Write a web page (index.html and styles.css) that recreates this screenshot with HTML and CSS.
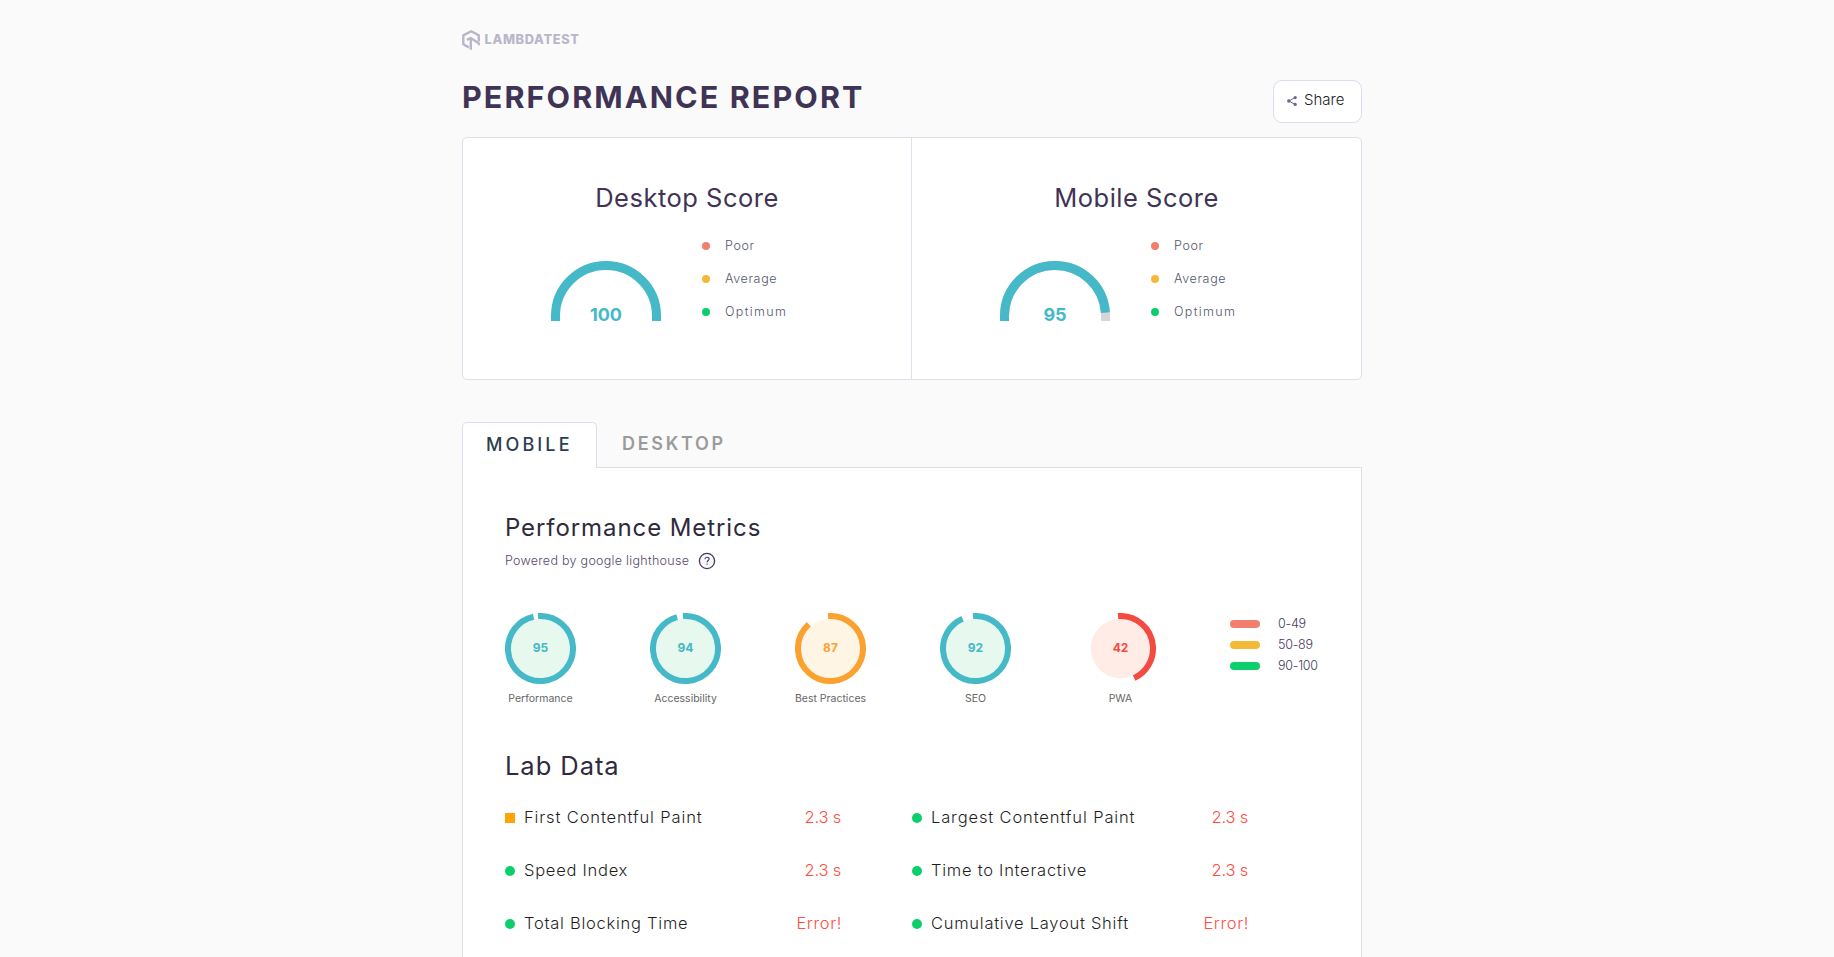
FILE: index.html
```html
<!DOCTYPE html>
<html lang="en">
<head>
<meta charset="utf-8">
<title>Performance Report</title>
<link rel="stylesheet" href="styles.css">
</head>
<body>
<main class="page">
  <div class="logo">
    <svg class="logo-mark" viewBox="0 0 18 20" width="18" height="20" fill="none" stroke="#b9b6ca" stroke-width="2.4" stroke-linejoin="round"><path d="M6.8 17.4 1.3 14.2V5.4L9.2 1.3l7.6 4.1v6.2"/><path d="M4.9 9.8 8.8 8l8.2 5.4v1.8M8.8 8v11.8"/></svg>
    <span class="logo-text">LAMBDATEST</span>
  </div>
  <header class="head">
    <h1 class="title">PERFORMANCE REPORT</h1>
    <button class="share"><svg class="share-icon" viewBox="0 0 10 10" width="10" height="10"><path d="M8.2 1.5 1.9 5l6.3 3.5" fill="none" stroke="#6b6590" stroke-width="1"/><g fill="#6b6590"><circle cx="8.2" cy="1.6" r="1.6"/><circle cx="1.8" cy="5" r="1.7"/><circle cx="8.2" cy="8.4" r="1.6"/></g></svg><span>Share</span></button>
  </header>

  <section class="scores">
    <article class="score">
      <h2 class="score-title">Desktop Score</h2>
      <div class="score-body">
        <svg class="gauge" viewBox="0 0 110 68" width="110" height="68"><path class="gauge-fill" d="M4.5 60V55A50.5 50.5 0 0 1 105.5 55V60"/><text x="55" y="60">100</text></svg>
        <ul class="levels">
          <li><i class="dot poor"></i><span>Poor</span></li>
          <li><i class="dot average"></i><span>Average</span></li>
          <li><i class="dot optimum"></i><span>Optimum</span></li>
        </ul>
      </div>
    </article>
    <article class="score">
      <h2 class="score-title">Mobile Score</h2>
      <div class="score-body">
        <svg class="gauge" viewBox="0 0 110 68" width="110" height="68"><path class="gauge-rest" d="M4.5 60V55A50.5 50.5 0 0 1 105.5 55V60"/><path class="gauge-fill" pathLength="100" stroke-dasharray="95 100" d="M4.5 60V55A50.5 50.5 0 0 1 105.5 55V60"/><text x="55" y="60">95</text></svg>
        <ul class="levels">
          <li><i class="dot poor"></i><span>Poor</span></li>
          <li><i class="dot average"></i><span>Average</span></li>
          <li><i class="dot optimum"></i><span>Optimum</span></li>
        </ul>
      </div>
    </article>
  </section>

  <nav class="tabs">
    <a class="tab active">MOBILE</a>
    <a class="tab">DESKTOP</a>
  </nav>

  <section class="panel">
    <h2 class="metrics-title">Performance Metrics</h2>
    <p class="powered"><span>Powered by google lighthouse</span><svg viewBox="0 0 18 18" width="18" height="18"><circle cx="9" cy="9" r="7.6" fill="#f8f8fb" stroke="#45395c" stroke-width="1.3"/><path d="M6.9 7.2C7 5.9 7.9 5.2 9 5.2s2.1.7 2.1 1.8c0 1.4-2 1.6-2 3.2M9.1 11.5v1.3" fill="none" stroke="#45395c" stroke-width="1.1"/></svg></p>
    <div class="metrics">
      <figure class="metric good"><svg class="ring" viewBox="0 0 71 71" width="71" height="71"><circle class="disc" cx="35.5" cy="35.5" r="29.8"/><circle class="arc" cx="35.5" cy="35.5" r="32.5" pathLength="360" stroke-dasharray="352 360" transform="rotate(-94.4 35.5 35.5)"/><text x="35.5" y="39.3">95</text></svg><figcaption>Performance</figcaption></figure>
      <figure class="metric good"><svg class="ring" viewBox="0 0 71 71" width="71" height="71"><circle class="disc" cx="35.5" cy="35.5" r="29.8"/><circle class="arc" cx="35.5" cy="35.5" r="32.5" pathLength="360" stroke-dasharray="349.5 360" transform="rotate(-94.4 35.5 35.5)"/><text x="35.5" y="39.3">94</text></svg><figcaption>Accessibility</figcaption></figure>
      <figure class="metric fair"><svg class="ring" viewBox="0 0 71 71" width="71" height="71"><circle class="disc" cx="35.5" cy="35.5" r="29.8"/><circle class="arc" cx="35.5" cy="35.5" r="32.5" pathLength="360" stroke-dasharray="322.5 360" transform="rotate(-94.4 35.5 35.5)"/><text x="35.5" y="39.3">87</text></svg><figcaption>Best Practices</figcaption></figure>
      <figure class="metric good"><svg class="ring" viewBox="0 0 71 71" width="71" height="71"><circle class="disc" cx="35.5" cy="35.5" r="29.8"/><circle class="arc" cx="35.5" cy="35.5" r="32.5" pathLength="360" stroke-dasharray="341 360" transform="rotate(-94.4 35.5 35.5)"/><text x="35.5" y="39.3">92</text></svg><figcaption>SEO</figcaption></figure>
      <figure class="metric bad"><svg class="ring" viewBox="0 0 71 71" width="71" height="71"><circle class="disc" cx="35.5" cy="35.5" r="29.8"/><circle class="arc" cx="35.5" cy="35.5" r="32.5" pathLength="360" stroke-dasharray="159.5 360" transform="rotate(-94.4 35.5 35.5)"/><text x="35.5" y="39.3">42</text></svg><figcaption>PWA</figcaption></figure>
      <ul class="ranges">
        <li><i class="pill poor"></i><span>0-49</span></li>
        <li><i class="pill average"></i><span>50-89</span></li>
        <li><i class="pill optimum"></i><span>90-100</span></li>
      </ul>
    </div>
    <h2 class="lab-title">Lab Data</h2>
    <div class="lab">
      <div class="row paint"><i class="mark square"></i><span>First Contentful Paint</span><b>2.3 s</b></div>
      <div class="row paint"><i class="mark"></i><span>Largest Contentful Paint</span><b>2.3 s</b></div>
      <div class="row"><i class="mark"></i><span>Speed Index</span><b>2.3 s</b></div>
      <div class="row"><i class="mark"></i><span>Time to Interactive</span><b>2.3 s</b></div>
      <div class="row"><i class="mark"></i><span>Total Blocking Time</span><b class="error">Error!</b></div>
      <div class="row"><i class="mark"></i><span>Cumulative Layout Shift</span><b class="error">Error!</b></div>
    </div>
  </section>
</main>
</body>
</html>
```
FILE: styles.css
```css
* { box-sizing: border-box; }
body {
  margin: 0;
  height: 957px;
  overflow: hidden;
  background: #fafafa;
  color: #2f2a3d;
  font-family: Inter, "Open Sans", sans-serif;
}
h1, h2, p, ul, figure { margin: 0; padding: 0; font-weight: 400; }
ul { list-style: none; }
i { display: block; flex: none; }
.page { width: 900px; margin: 0 0 0 462px; padding-top: 30px; }

.logo { display: flex; height: 20px; gap: 4.5px; }
.logo-text { font-size: 12.8px; line-height: 20px; font-weight: 800; letter-spacing: .65px; color: #b9b6ca; }

.head { display: flex; justify-content: space-between; height: 87px; padding-top: 30px; }
.title { font-size: 30.5px; line-height: 34px; font-weight: 700; letter-spacing: 2.1px; color: #3f3356; white-space: nowrap; }
.share {
  display: flex; align-items: center; gap: 7px;
  width: 89px; height: 43px; padding: 0 0 2px 13px;
  border: 1px solid #dcdcee; border-radius: 9px; background: #fff;
  font: 300 15px/20px Inter, sans-serif; color: #222;
}
.share span { padding-bottom: 2px; }

.scores { display: flex; height: 243px; border: 1px solid #dddfea; border-radius: 5px; background: #fff; }
.score { width: 448px; padding-top: 44px; }
.score + .score { width: 450px; border-left: 1px solid #dddfea; }
.score-title { font-size: 25.5px; line-height: 32px; letter-spacing: .5px; text-align: center; color: #3f3356; }
.score-body { display: flex; align-items: flex-start; gap: 41px; padding: 15px 0 0 88px; }
.gauge { margin-top: 32px; }
.gauge-fill, .gauge-rest { fill: none; stroke: #45b9c7; stroke-width: 9; }
.gauge-rest { stroke: #d6d6d6; }
.gauge text { fill: #45b9c7; font-size: 18px; font-weight: 700; text-anchor: middle; }
.levels li { display: flex; align-items: center; gap: 15px; height: 33px; font-size: 12.5px; font-weight: 300; letter-spacing: .65px; color: #535770; }
.levels li:last-child { letter-spacing: 1.35px; }
.dot { width: 8px; height: 8px; border-radius: 50%; }
.poor { background: #f27f6e; }
.average { background: #f5b938; }
.optimum { background: #0ccf6c; }

.tabs { display: flex; height: 46px; margin-top: 42px; }
.tab { padding: 10px 0 0 25px; font-size: 18px; line-height: 24px; font-weight: 600; letter-spacing: 2.7px; color: #9b9b9b; }
.tab.active {
  position: relative; width: 135px; padding: 10px 0 0 23px;
  border: 1px solid #dcdff0; border-bottom: 0; border-radius: 5px 5px 0 0;
  background: #fff; color: #2c3e50; font-weight: 500; letter-spacing: 3.1px;
}

.panel { height: 520px; margin-top: -1px; padding: 45px 42px 0; border: 1px solid #dddfe4; background: #fff; }
.metrics-title { font-size: 24px; line-height: 30px; letter-spacing: .92px; }
.powered { display: flex; align-items: center; gap: 9px; height: 18px; margin-top: 9px; font-size: 12.5px; line-height: 18px; font-weight: 300; letter-spacing: .28px; color: #564a6e; }
.powered span { padding-bottom: 1px; }
.metrics { display: flex; height: 96px; margin-top: 43px; gap: 74px; }
.metric { display: flex; flex-direction: column; align-items: center; width: 71px; flex: none; }
.ring { display: block; }
.arc { fill: none; stroke-width: 6; stroke: currentColor; }
.metric text { fill: currentColor; font-size: 12px; font-weight: 700; text-anchor: middle; }
.good { color: #45b9c7; }
.good .disc { fill: #e7f8ee; }
.fair { color: #fba12f; }
.fair .disc { fill: #fff5e5; }
.bad { color: #f44b40; }
.bad .disc { fill: #ffece7; }
figcaption { margin-top: 7px; font-size: 10.5px; line-height: 16px; font-weight: 400; color: #666; white-space: nowrap; }
.ranges { width: 92px; flex: none; }
.ranges li { display: flex; align-items: center; gap: 18px; height: 21px; font-size: 12.5px; font-weight: 300; letter-spacing: -.25px; color: #45395c; }
.pill { width: 30px; height: 8px; border-radius: 4px; }

.lab-title { margin-top: 41px; font-size: 25.5px; line-height: 32px; letter-spacing: .95px; }
.lab { display: grid; grid-template-columns: 336px 336px; column-gap: 71px; grid-auto-rows: 53px; margin-top: 9px; }
.row { display: flex; align-items: center; gap: 9px; font-size: 16.5px; font-weight: 300; letter-spacing: .74px; color: #1f1f1f; white-space: nowrap; }
.row.paint { letter-spacing: .87px; }
.row span, .row b { padding-bottom: 2px; }
.mark { width: 10px; height: 10px; border-radius: 50%; background: #0ccf6c; }
.mark.square { border-radius: 0; background: #ffa400; }
.row b { margin-left: auto; font-weight: 300; letter-spacing: -.2px; color: #ff4e42; }
.row b.error { margin-right: -1px; letter-spacing: .6px; }
```
